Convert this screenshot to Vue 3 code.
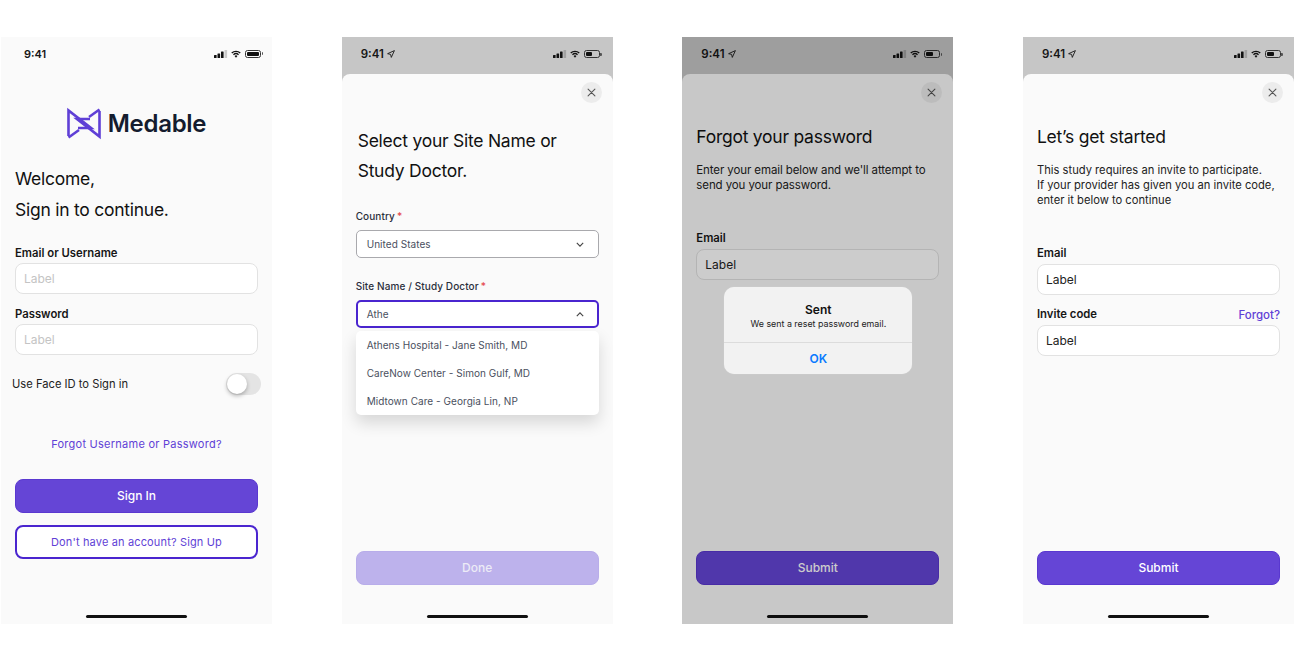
<template>
  <svg class="defs" width="0" height="0" aria-hidden="true">
    <symbol id="signal" viewBox="0 0 14 8" preserveAspectRatio="none">
      <rect x="0" y="5" width="2.6" height="3" rx="0.5" />
      <rect x="3.500" y="3.5" width="2.6" height="4.5" rx="0.5" />
      <rect x="7" y="1.500" width="2.6" height="6.5" rx="0.5" />
      <rect x="10.500" y="0" width="2.6" height="8" rx="0.5" opacity="0.2" />
    </symbol>
    <symbol id="wifi" viewBox="0 0 11 8">
      <path d="M5.5 8 3.9 6.2a2.3 2.3 0 0 1 3.2 0Z" />
      <path d="M3.2 5.4 2.2 4.3a4.8 4.8 0 0 1 6.6 0L7.8 5.4a3.4 3.4 0 0 0-4.6 0Z" />
      <path d="M1.4 3.5.3 2.4a7.5 7.5 0 0 1 10.4 0L9.6 3.5a6 6 0 0 0-8.2 0Z" />
    </symbol>
    <symbol id="arrow" viewBox="0 0 8 8">
      <path d="M7.4.6 4.3 7.4 3.6 4.4.6 3.7Z" fill="none" stroke="currentColor" stroke-width="0.9" stroke-linejoin="round" />
    </symbol>
    <symbol id="close" viewBox="0 0 10 10">
      <path d="M1.2 1.2 8.8 8.8M8.8 1.2 1.2 8.8" fill="none" stroke="currentColor" stroke-width="1.2" stroke-linecap="round" />
    </symbol>
  </svg>

  <main class="page">
    <!-- sign in -->
    <section class="phone">
      <div class="status">
        <span class="time">9:41</span>
        <span class="status-icons">
          <svg class="ic-signal"><use href="#signal" /></svg>
          <svg class="ic-wifi"><use href="#wifi" /></svg>
          <span class="battery full"><i></i></span>
        </span>
      </div>
      <div class="login">
        <div class="logo">
          <svg class="logo-mark" viewBox="0 0 34 33" fill="none" stroke="#5f3fd6" stroke-width="2.600">
            <path d="M1.500 29V3.500L24 21H11" />
            <path d="M1.500 30.500 12 23" />
            <path d="M32.500 4V29.500L10 12H23" />
            <path d="M32.500 2.500 22 10" />
          </svg>
          <span class="logo-text">Medable</span>
        </div>
        <h1 class="title two-line">Welcome,<br />Sign in to continue.</h1>
        <label class="field-label first">Email or Username</label>
        <div class="input placeholder">Label</div>
        <label class="field-label second">Password</label>
        <div class="input placeholder">Label</div>
        <div class="face-row">
          <span>Use Face ID to Sign in</span>
          <span class="toggle"><i></i></span>
        </div>
        <a class="forgot-link">Forgot Username or Password?</a>
        <button class="btn primary">Sign In</button>
        <button class="btn outline">Don't have an account? Sign Up</button>
      </div>
      <div class="home-bar"></div>
    </section>

    <!-- site picker -->
    <section class="phone gray">
      <div class="status">
        <span class="time">9:41<svg class="ic-arrow"><use href="#arrow" /></svg></span>
        <span class="status-icons">
          <svg class="ic-signal"><use href="#signal" /></svg>
          <svg class="ic-wifi"><use href="#wifi" /></svg>
          <span class="battery"><i></i></span>
        </span>
      </div>
      <div class="sheet">
        <div class="close-row"><span class="close"><svg><use href="#close" /></svg></span></div>
        <h1 class="title site-title">Select your Site Name or<br />Study Doctor.</h1>
        <div class="small-label">Country<b>*</b></div>
        <div class="select">
          <span>United States</span>
          <svg viewBox="0 0 10 6"><path d="M1 1 5 5 9 1" /></svg>
        </div>
        <div class="small-label site-label">Site Name / Study Doctor<b>*</b></div>
        <div class="select open">
          <span>Athe</span>
          <svg viewBox="0 0 10 6"><path d="M1 5 5 1 9 5" /></svg>
          <ul class="options">
            <li v-for="opt in siteOptions" :key="opt">{{ opt }}</li>
          </ul>
        </div>
        <div class="spacer"></div>
        <button class="btn disabled">Done</button>
      </div>
      <div class="home-bar"></div>
    </section>

    <!-- forgot password, alert on top -->
    <section class="phone gray">
      <div class="status">
        <span class="time">9:41<svg class="ic-arrow"><use href="#arrow" /></svg></span>
        <span class="status-icons">
          <svg class="ic-signal"><use href="#signal" /></svg>
          <svg class="ic-wifi"><use href="#wifi" /></svg>
          <span class="battery"><i></i></span>
        </span>
      </div>
      <div class="sheet">
        <div class="close-row"><span class="close"><svg><use href="#close" /></svg></span></div>
        <h1 class="title form-title">Forgot your password</h1>
        <p class="intro">Enter your email below and we'll attempt to send you your password.</p>
        <label class="field-label forgot-email">Email</label>
        <div class="input">Label</div>
        <div class="spacer"></div>
        <button class="btn primary">Submit</button>
      </div>
      <div class="home-bar"></div>
      <div class="dim"></div>
      <div class="alert">
        <div class="alert-body">
          <strong>Sent</strong>
          <span>We sent a reset password email.</span>
        </div>
        <div class="alert-ok">OK</div>
      </div>
    </section>

    <!-- invite code -->
    <section class="phone gray">
      <div class="status">
        <span class="time">9:41<svg class="ic-arrow"><use href="#arrow" /></svg></span>
        <span class="status-icons">
          <svg class="ic-signal"><use href="#signal" /></svg>
          <svg class="ic-wifi"><use href="#wifi" /></svg>
          <span class="battery"><i></i></span>
        </span>
      </div>
      <div class="sheet">
        <div class="close-row"><span class="close"><svg><use href="#close" /></svg></span></div>
        <h1 class="title form-title">Let’s get started</h1>
        <p class="intro invite-intro">This study requires an invite to participate.<br />If your provider has given you an invite code, enter it below to continue</p>
        <label class="field-label invite-email">Email</label>
        <div class="input">Label</div>
        <div class="label-row">
          <label class="field-label">Invite code</label>
          <a class="forgot-small">Forgot?</a>
        </div>
        <div class="input">Label</div>
        <div class="spacer"></div>
        <button class="btn primary">Submit</button>
      </div>
      <div class="home-bar"></div>
    </section>
  </main>
</template>

<script setup>
const siteOptions = [
  'Athens Hospital - Jane Smith, MD',
  'CareNow Center - Simon Gulf, MD',
  'Midtown Care - Georgia Lin, NP'
]
</script>

<style>
html,
body {
  background: #fff;
}
</style>

<style scoped>
.defs {
  position: absolute;
}

.page {
  display: flex;
  gap: 69.67px;
  width: 1294px;
  height: 660px;
  box-sizing: border-box;
  padding: 37px 0 0 1px;
  background: #fff;
  font-family: Inter, "Liberation Sans", sans-serif;
  color: #111;
  overflow: hidden;
}

.phone {
  position: relative;
  display: flex;
  flex-direction: column;
  flex: 0 0 271px;
  height: 587px;
  background: #fafafa;
  overflow: hidden;
}

.phone.gray {
  background: #c6c6c6;
}

.status {
  display: flex;
  align-items: center;
  justify-content: space-between;
  flex: 0 0 33px;
  padding: 0 9px 0 23px;
}

.phone.gray .status {
  flex-basis: 37px;
  box-sizing: border-box;
  padding: 0 11px 3px 19px;
}

.time {
  display: flex;
  align-items: center;
  gap: 3px;
  font-size: 11px;
  font-weight: 600;
  color: #161616;
}

.phone.gray .time {
  font-size: 11.500px;
}

.status-icons {
  display: flex;
  align-items: center;
  gap: 3px;
  color: #111;
}

.status-icons svg,
.time svg {
  display: block;
  fill: currentColor;
}

.ic-signal {
  width: 14px;
  height: 8px;
}

.ic-wifi {
  width: 10px;
  height: 8px;
  margin-right: 1px;
}

.ic-arrow {
  width: 8px;
  height: 8px;
  fill: none !important;
}

.battery {
  position: relative;
  display: block;
  width: 16px;
  height: 8px;
  margin-right: 2px;
  box-sizing: border-box;
  border: 1px solid #333;
  border-radius: 2.500px;
  padding: 1px;
}

.battery::after {
  content: "";
  position: absolute;
  top: 1.500px;
  right: -3px;
  width: 1.500px;
  height: 3px;
  background: #555;
  border-radius: 0 1px 1px 0;
}

.battery i {
  display: block;
  width: 55%;
  height: 100%;
  background: #111;
  border-radius: 1px;
}

.battery.full i {
  width: 100%;
}

.login {
  flex: 1;
  display: flex;
  flex-direction: column;
  padding: 37px 14px 0;
}

.logo {
  display: flex;
  align-items: center;
  justify-content: center;
  gap: 7px;
  height: 33px;
}

.logo-mark {
  width: 34px;
  height: 33px;
  display: block;
}

.logo-text {
  font-size: 24px;
  font-weight: 600;
  letter-spacing: -0.3px;
  color: #141c2e;
}

.title {
  margin: 0;
  font-size: 17.500px;
  font-weight: 400;
  letter-spacing: -0.25px;
  color: #111;
}

.two-line {
  margin-top: 23px;
  line-height: 31px;
}

.field-label {
  display: block;
  font-size: 11.300px;
  line-height: 15px;
  font-weight: 600;
  color: #161616;
}

.field-label.first {
  margin-top: 21px;
  margin-bottom: 2px;
}

.field-label.second {
  margin-top: 13px;
  margin-bottom: 2px;
}

.input {
  height: 31px;
  box-sizing: border-box;
  display: flex;
  align-items: center;
  padding: 0 8px;
  background: #fff;
  border: 1px solid #e2e2e2;
  border-radius: 8px;
  font-size: 12px;
  color: #222;
}

.input.placeholder {
  color: #c4c4c4;
}

.face-row {
  display: flex;
  align-items: center;
  justify-content: space-between;
  margin: 18px -3px 0 -3px;
  height: 22px;
  font-size: 11.200px;
  color: #222;
}

.toggle {
  position: relative;
  width: 35px;
  height: 22px;
  border-radius: 11px;
  background: #e4e4e4;
}

.toggle i {
  position: absolute;
  top: 1px;
  left: 1px;
  width: 20px;
  height: 20px;
  border-radius: 50%;
  background: #fff;
  box-shadow: 0 2px 4px rgba(0, 0, 0, 0.28);
}

.forgot-link {
  margin-top: 41px;
  font-size: 11px;
  line-height: 16px;
  text-align: center;
  color: #5f3fd6;
  letter-spacing: 0.25px;
}

.btn {
  display: block;
  width: 100%;
  height: 34px;
  box-sizing: border-box;
  border-radius: 8px;
  border: 1px solid #5a38d0;
  font-family: inherit;
  font-size: 12px;
  font-weight: 500;
  padding: 0 0 2px;
}

.btn.primary {
  background: #6545d6;
  color: #fff;
}

.login .btn.primary {
  margin-top: 27px;
}

.btn.outline {
  margin-top: 12px;
  padding: 0;
  background: #fff;
  border: 2px solid #4a25cf;
  color: #5f3fd6;
  font-size: 11px;
  font-weight: 400;
  letter-spacing: 0.15px;
}

.btn.disabled {
  background: #bdb2ec;
  border-color: #b8adea;
  color: #ecebf6;
}

.sheet {
  flex: 1;
  display: flex;
  flex-direction: column;
  min-height: 0;
  padding: 8px 14px 0;
  background: #fafafa;
  border-radius: 8px 8px 0 0;
}

.close-row {
  display: flex;
  justify-content: flex-end;
  margin-right: -3px;
}

.close {
  display: flex;
  align-items: center;
  justify-content: center;
  width: 21px;
  height: 21px;
  border-radius: 50%;
  background: #ececec;
  color: #555;
}

.close svg {
  width: 9px;
  height: 9px;
  display: block;
}

.site-title {
  margin: 23px 0 0 2px;
  line-height: 30px;
}

.small-label {
  margin-top: 24px;
  font-size: 10px;
  line-height: 13px;
  font-weight: 500;
  color: #2a2f3c;
  letter-spacing: 0.1px;
}

.small-label b {
  margin-left: 2px;
  font-weight: 500;
  color: #e5484d;
}

.small-label.site-label {
  margin-top: 22px;
}

.select {
  position: relative;
  display: flex;
  align-items: center;
  justify-content: space-between;
  height: 28px;
  box-sizing: border-box;
  margin-top: 7px;
  padding: 0 14px 0 10px;
  background: #fff;
  border: 1px solid #a9a9ad;
  border-radius: 5px;
  font-size: 10px;
  color: #4a4f5e;
  letter-spacing: 0.05px;
}

.select.open {
  border-color: #4a25cf;
  border-width: 2px;
  padding: 0 13px 0 9px;
}

.select svg {
  width: 8px;
  height: 5px;
  fill: none;
  stroke: #444;
  stroke-width: 1.4;
}

.options {
  position: absolute;
  top: 29px;
  left: -2px;
  right: -2px;
  margin: 0;
  padding: 0;
  list-style: none;
  background: #fff;
  border-radius: 5px;
  box-shadow: 0 8px 16px rgba(0, 0, 0, 0.14);
}

.options li {
  display: flex;
  align-items: center;
  height: 28px;
  padding-left: 11px;
}

.spacer {
  flex: 1;
}

.sheet .btn {
  margin-bottom: 39px;
  flex: none;
  width: 243px;
}

.form-title {
  margin: 21px 0 0;
  line-height: 26px;
}

.intro {
  margin: 13px 0 0;
  font-size: 11.500px;
  letter-spacing: -0.1px;
  line-height: 15px;
  color: #222;
}

.intro.invite-intro {
  font-size: 11.200px;
  letter-spacing: 0;
}

.field-label.forgot-email {
  margin-top: 38px;
  margin-bottom: 3px;
}

.field-label.invite-email {
  margin-top: 38px;
  margin-bottom: 3px;
}

.label-row {
  display: flex;
  justify-content: space-between;
  align-items: center;
  margin: 12px 0 3px;
}

.forgot-small {
  font-size: 11.500px;
  font-weight: 500;
  color: #5f3fd6;
}

.home-bar {
  position: absolute;
  left: 85px;
  bottom: 6px;
  width: 101px;
  height: 3px;
  border-radius: 2px;
  background: #111;
}

.dim {
  position: absolute;
  inset: 0;
  background: rgba(0, 0, 0, 0.2);
}

.alert {
  position: absolute;
  top: 250px;
  left: 42px;
  width: 188px;
  height: 87px;
  display: flex;
  flex-direction: column;
  background: #f2f2f2;
  border-radius: 10px;
  box-shadow: 0 0 1px rgba(255, 255, 255, 0.5);
}

.alert-body {
  flex: 0 0 56px;
  display: flex;
  flex-direction: column;
  align-items: center;
  justify-content: center;
  gap: 1px;
  padding-top: 3px;
  box-sizing: border-box;
  border-bottom: 1px solid #dcdcdc;
}

.alert-body strong {
  font-size: 12px;
  line-height: 14px;
  font-weight: 600;
}

.alert-body span {
  font-size: 8.900px;
  line-height: 12px;
  color: #222;
}

.alert-ok {
  flex: 1;
  display: flex;
  align-items: center;
  justify-content: center;
  font-size: 12px;
  font-weight: 600;
  color: #0a7aff;
}
</style>
